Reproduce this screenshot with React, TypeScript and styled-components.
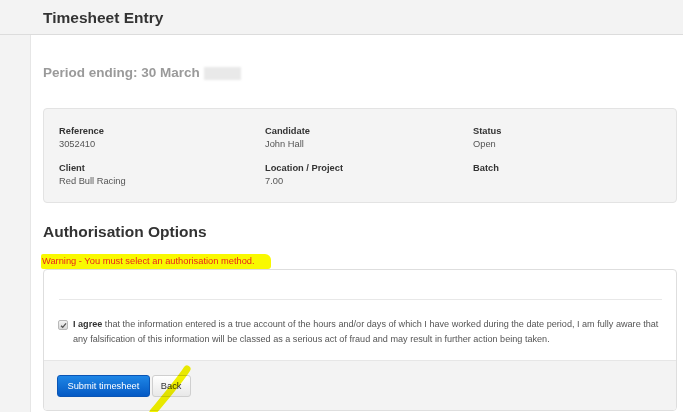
import React from "react";
import styled, { createGlobalStyle } from "styled-components";

const Global = createGlobalStyle`
  html, body { margin: 0; padding: 0; }
  body {
    background: #f3f3f3;
    font-family: "Liberation Sans", Arial, sans-serif;
    color: #333;
    overflow: hidden;
  }
`;

const Page = styled.div`
  width: 683px;
  height: 412px;
  position: relative;
  overflow: hidden;
`;

const Header = styled.header`
  height: 35px;
  border-bottom: 1px solid #dcdcdc;
  padding: 2px 0 0 43px;
  display: flex;
  align-items: center;
  box-sizing: border-box;
`;

const Title = styled.h1`
  margin: 0;
  font-size: 15.5px;
  font-weight: bold;
  color: #333;
`;

const Panel = styled.main`
  margin-left: 30px;
  background: #fff;
  border-left: 1px solid #e6e6e6;
  padding: 0 6px 0 12px;
  height: 377px;
`;

const Period = styled.h2`
  margin: 0;
  height: 73px;
  padding-top: 3px;
  box-sizing: border-box;
  font-size: 13.5px;
  font-weight: bold;
  color: #9a9a9a;
  display: flex;
  align-items: center;
  line-height: 16px;
`;

const Redacted = styled.span`
  display: inline-block;
  width: 37px;
  height: 13px;
  margin-left: 4px;
  background: #e9e9e9;
  filter: blur(0.8px);
`;

const Well = styled.section`
  background: #f4f4f4;
  border: 1px solid #e3e3e3;
  border-radius: 4px;
  padding: 15.5px 15px 13px;
  display: grid;
  grid-template-columns: 206px 208px 1fr;
  row-gap: 10px;
  font-size: 9.3px;
  line-height: 13.5px;
`;

const Field = styled.div`
  display: flex;
  flex-direction: column;
`;

const Label = styled.span`
  font-weight: bold;
  color: #333;
`;

const Value = styled.span`
  color: #555;
  min-height: 13.5px;
`;

const SectionTitle = styled.h2`
  margin: 20px 0 0;
  font-size: 15.5px;
  font-weight: bold;
  color: #333;
  line-height: 18px;
`;

const Warning = styled.div`
  margin-top: 13.5px;
  margin-left: -2px;
  display: inline-block;
  font-size: 9.3px;
  line-height: 15px;
  color: #e8261a;
  background: #f9f900;
  padding: 0 16px 0 1px;
  border-radius: 2px 6px 3px 2px;
`;

const AuthBox = styled.section`
  border: 1px solid #dedede;
  border-radius: 4px;
  background: #fff;
  overflow: hidden;
`;

const AuthBody = styled.div`
  padding: 29px 14px 13px 14px;
`;

const Rule = styled.hr`
  margin: 0 0 0 1px;
  border: 0;
  border-top: 1px solid #e8e8e8;
`;

const AgreeRow = styled.div`
  margin-top: 17px;
  display: flex;
  gap: 5px;
  font-size: 9.1px;
  line-height: 15px;
  color: #555;
`;

const Check = styled.span`
  flex: none;
  width: 8px;
  height: 8px;
  margin-top: 3px;
  border: 1px solid #b9b9b9;
  border-radius: 2px;
  background: linear-gradient(#f2f2f2, #d9d9d9);
  display: flex;
  align-items: center;
  justify-content: center;
`;

const AgreeText = styled.p`
  margin: 0;
  & > b {
    color: #333;
  }
`;

const Footer = styled.div`
  background: #f3f3f3;
  border-top: 1px solid #e6e6e6;
  padding: 14px 14px 13px 13px;
  display: flex;
  gap: 2px;
`;

const Button = styled.button<{ $primary?: boolean }>`
  height: 22px;
  padding: 0 ${(p) => (p.$primary ? "9.5px" : "8px")};
  font-family: "Liberation Sans", Arial, sans-serif;
  font-size: 9.3px;
  border-radius: 3px;
  cursor: pointer;
  color: ${(p) => (p.$primary ? "#fff" : "#333")};
  border: 1px solid ${(p) => (p.$primary ? "#0a55b5" : "#cfcfcf")};
  background: ${(p) =>
    p.$primary
      ? "linear-gradient(#1e86e6, #0459c4)"
      : "linear-gradient(#ffffff, #e8e8e8)"};
`;

const Marker = styled.svg`
  position: absolute;
  left: 140px;
  top: 360px;
  width: 60px;
  height: 55px;
  mix-blend-mode: multiply;
  pointer-events: none;
`;

export default function App() {
  return (
    <>
      <Global />
      <Page>
        <Header>
          <Title>Timesheet Entry</Title>
        </Header>
        <Panel>
          <Period>
            Period ending: 30 March <Redacted />
          </Period>
          <Well>
            <Field>
              <Label>Reference</Label>
              <Value>3052410</Value>
            </Field>
            <Field>
              <Label>Candidate</Label>
              <Value>John Hall</Value>
            </Field>
            <Field>
              <Label>Status</Label>
              <Value>Open</Value>
            </Field>
            <Field>
              <Label>Client</Label>
              <Value>Red Bull Racing</Value>
            </Field>
            <Field>
              <Label>Location / Project</Label>
              <Value>7.00</Value>
            </Field>
            <Field>
              <Label>Batch</Label>
              <Value />
            </Field>
          </Well>
          <SectionTitle>Authorisation Options</SectionTitle>
          <Warning>Warning - You must select an authorisation method.</Warning>
          <AuthBox>
            <AuthBody>
              <Rule />
              <AgreeRow>
                <Check>
                  <svg width="7" height="7" viewBox="0 0 8 8">
                    <path d="M1.2 4.2 L3.1 6.1 L6.9 1.6" fill="none" stroke="#555" strokeWidth="1.5" />
                  </svg>
                </Check>
                <AgreeText>
                  <b>I agree </b>that the information entered is a true account of the hours and/or days of which I have worked during the date period, I am fully aware that any falsification of this information will be classed as a serious act of fraud and may result in further action being taken.
                </AgreeText>
              </AgreeRow>
            </AuthBody>
            <Footer>
              <Button $primary>Submit timesheet</Button>
              <Button>Back</Button>
            </Footer>
          </AuthBox>
        </Panel>
        <Marker viewBox="0 0 60 55">
          <path d="M47 9 C40 20, 28 34, 13 52" fill="none" stroke="#f4f400" strokeWidth="7" strokeLinecap="round" />
        </Marker>
      </Page>
    </>
  );
}
